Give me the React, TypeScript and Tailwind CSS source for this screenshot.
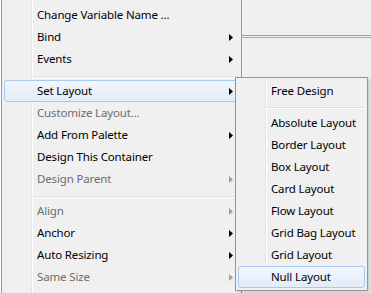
import React from "react"

type Item = { label: string; sub?: boolean; disabled?: boolean; active?: boolean } | "sep"

const mainItems: Item[] = [
    { label: "Change Variable Name ..." },
    { label: "Bind", sub: true },
    { label: "Events", sub: true },
    "sep",
    { label: "Set Layout", sub: true, active: true },
    { label: "Customize Layout...", disabled: true },
    { label: "Add From Palette", sub: true },
    { label: "Design This Container" },
    { label: "Design Parent", sub: true, disabled: true },
    "sep",
    { label: "Align", sub: true, disabled: true },
    { label: "Anchor", sub: true },
    { label: "Auto Resizing", sub: true },
    { label: "Same Size", sub: true, disabled: true },
]

const layoutItems: Item[] = [
    { label: "Free Design" },
    "sep",
    { label: "Absolute Layout" },
    { label: "Border Layout" },
    { label: "Box Layout" },
    { label: "Card Layout" },
    { label: "Flow Layout" },
    { label: "Grid Bag Layout" },
    { label: "Grid Layout" },
    { label: "Null Layout", active: true },
]

const Arrow = ({ disabled }: { disabled?: boolean }) => (
    <svg width="4" height="7" viewBox="0 0 4 7" className="shrink-0">
        <polygon points="0,0 4,3.5 0,7" fill={disabled ? "#a0a0a0" : "#000"} />
    </svg>
)

const MenuRow = ({ item, sepPad }: { item: Item; sepPad: string }) => {
    if (item === "sep") {
        return (
            <div className={`h-[10px] pl-[27px] ${sepPad}`}>
                <div className="h-px bg-[#e0e0e0]" />
                <div className="h-px bg-white" />
            </div>
        )
    }
    return (
        <div
            className={`h-[22px] flex items-center pl-[32px] pr-[5px] rounded-[3px] border ${
                item.active
                    ? "border-[#a8caf0] bg-gradient-to-b from-[#f3f7fd] to-[#e2ebf7]"
                    : "border-transparent"
            }`}
        >
            <span
                className={`grow leading-none whitespace-nowrap ${
                    item.disabled ? "text-[#6d6d6d]" : "text-[#000]"
                }`}
            >
                {item.label}
            </span>
            {item.sub && <Arrow disabled={item.disabled} />}
        </div>
    )
}

const Menu = ({ items, sepPad, className }: { items: Item[]; sepPad: string; className: string }) => (
    <div className={`absolute bg-[#f0f0f0] border-[#979797] p-[2px] ${className}`}>
        {/* gutter line */}
        <div className="absolute top-0 bottom-0 left-[29px] w-[2px] border-l border-l-[#e2e3e3] border-r border-r-white" />
        <div className="relative flex flex-col">
            {items.map((item, i) => (
                <MenuRow key={i} item={item} sepPad={sepPad} />
            ))}
        </div>
    </div>
)

export default function App() {
    return (
        <div
            className="relative w-[371px] h-[293px] overflow-hidden bg-[#f0f0f0] text-[11.5px] tracking-[-0.15px] border-l border-l-white"
            style={{ fontFamily: '"Noto Sans", "Open Sans", sans-serif' }}
        >
            {/* editor stuff behind the popup */}
            <div className="pt-[35px] pl-[241px]">
                <div className="h-px bg-[#a0a0a0]" />
                <div className="h-px" />
                <div className="h-px bg-[#f0a030]" />
            </div>

            <Menu
                items={mainItems}
                sepPad="pt-[6px]"
                className="left-0 top-0 w-[241px] h-[300px] border-x pt-[4px]"
            />
            <Menu
                items={layoutItems}
                sepPad="pt-[5px]"
                className="left-[234px] top-[77px] w-[133px] border shadow-[2px_2px_3px_rgba(0,0,0,0.15)]"
            />
        </div>
    )
}
